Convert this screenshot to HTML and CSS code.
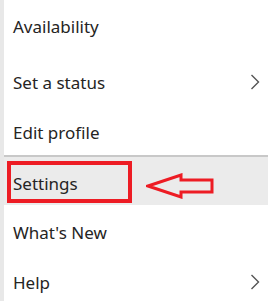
FILE: index.html
```html
<!DOCTYPE html>
<html lang="en">
<head>
    <meta charset="UTF-8">
    <title>Menu</title>
    <link rel="stylesheet" href="styles.css">
</head>
<body>

<div class="menu">
  <div class="item first">Availability</div>
  <div class="item">Set a status
    <svg class="chevron" width="10" height="16" viewBox="0 0 10 16"><polyline points="1.5,1 8.5,8 1.5,15" fill="none" stroke="#555555" stroke-width="1.4"/></svg>
  </div>
  <div class="item">Edit profile</div>
  <div class="divider"></div>
  <div class="item active">
    Settings
    <div class="mark"></div>
    <svg class="arrow" width="70" height="26" viewBox="0 0 70 26">
      <polygon points="2,13 35,2 35,7 66,7 66,19 35,19 35,24" fill="none" stroke="#ed1c24" stroke-width="3" stroke-linejoin="miter"/>
    </svg>
  </div>
  <div class="item">What's New</div>
  <div class="item">Help
    <svg class="chevron" width="10" height="16" viewBox="0 0 10 16"><polyline points="1.5,1 8.5,8 1.5,15" fill="none" stroke="#555555" stroke-width="1.4"/></svg>
  </div>
</div>

</body>
</html>
```

FILE: styles.css
```css
body {
  margin: 0;
  background: #ffffff;
  font-family: "Noto Sans", sans-serif;
  overflow: hidden;
}

div.menu {
  border-left: 4px solid #e8e8e8;
  height: 301px;
  box-sizing: border-box;
}

div.item {
  position: relative;
  height: 50px;
  box-sizing: border-box;
  display: flex;
  align-items: center;
  justify-content: space-between;
  padding: 4px 8px 0 9px;
  font-size: 17px;
  color: #252423;
}

div.first {
  height: 49px;
  margin-bottom: 6px;
}

div.divider {
  height: 2px;
  background: #c8c8c8;
}

div.active {
  height: 48px;
  background: #ebebeb;
}

/* annotation */
div.mark {
  position: absolute;
  left: 3px;
  top: 4px;
  width: 117px;
  height: 34px;
  border: 4px solid #ed1c24;
}

svg.arrow {
  position: absolute;
  left: 142px;
  top: 16px;
}
```
